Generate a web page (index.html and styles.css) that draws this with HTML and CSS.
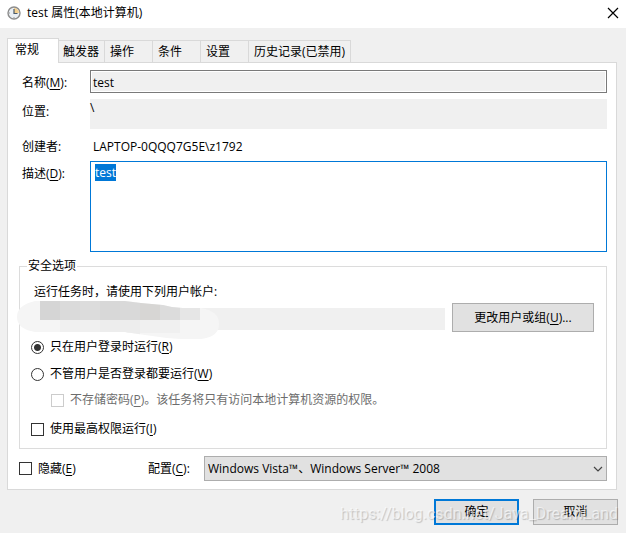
FILE: index.html
```html
<!DOCTYPE html>
<html lang="zh-CN">
<head>
    <meta charset="UTF-8">
    <meta name="viewport" content="width=device-width, initial-scale=1.0">
    <title>test 属性(本地计算机)</title>
    <link rel="stylesheet" href="styles.css">
</head>
<body>
    <header class="titlebar">
        <svg class="clock" width="14" height="14" viewBox="0 0 14 14">
            <circle cx="7" cy="7" r="6" fill="#e9eef3" stroke="#8c8c8c" stroke-width="1.4"/>
            <path d="M7 7V2a5 5 0 0 1 5 5z" fill="#f3cf8e"/>
            <path d="M7 3v4.500h3.500" fill="none" stroke="#4a5a6a" stroke-width="1.200"/>
            <path d="M7 11v1M2 7h1" stroke="#999"/>
        </svg>
        <h1 class="title">test 属性(本地计算机)</h1>
        <button class="close" type="button" aria-label="关闭">
            <svg width="12" height="12" viewBox="0 0 12 12">
                <path d="M1 1l10 10M11 1L1 11" fill="none" stroke="#000" stroke-width="1.200"/>
            </svg>
        </button>
    </header>

    <form class="dialog">
        <nav class="tabs">
            <button type="button" class="tab tab-active">常规</button>
            <button type="button" class="tab tab-wide">触发器</button>
            <button type="button" class="tab">操作</button>
            <button type="button" class="tab">条件</button>
            <button type="button" class="tab">设置</button>
            <button type="button" class="tab tab-last">历史记录(已禁用)</button>
        </nav>

        <main class="panel">
            <div class="fields">
                <label for="name">名称(<u>M</u>):</label>
                <input class="name" id="name" type="text" value="test" readonly>
                <label for="location">位置:</label>
                <output class="location" id="location">\</output>
                <label for="author">创建者:</label>
                <output class="author" id="author">LAPTOP-0QQQ7G5E\z1792</output>
                <label for="description">描述(<u>D</u>):</label>
                <textarea class="description" id="description" spellcheck="false">test</textarea>
            </div>

            <fieldset class="security">
                <legend>安全选项</legend>
                <label class="account-label" for="account">运行任务时，请使用下列用户帐户:</label>
                <div class="account-row">
                    <div class="account">
                        <output class="account-name" id="account"></output>
                        <svg class="smudge" width="202" height="39" viewBox="0 0 202 39">
                            <clipPath id="stroke">
                                <path d="M18 0H108Q116 1 124 2L146 4Q156 7 166 7H184Q202 10 202 23T184 38H164Q146 37 128 34L108 31H18Q0 28 0 16T18 0z"/>
                            </clipPath>
                            <g clip-path="url(#stroke)">
                                <path d="M0 0h202v39H0z" fill="#f5f5f5"/>
                                <path d="M43 19h120v13H43z" fill="#f0f0f0"/>
                                <path d="M83 19h40v20H83z" fill="#ededed"/>
                                <path d="M23 0h20v19H23z" fill="#d5d5d5"/>
                                <path d="M43 0h20v19H43z" fill="#dadada"/>
                                <path d="M63 0h20v19H63z" fill="#dcdcdc"/>
                                <path d="M83 0h20v19H83z" fill="#d8d8d8"/>
                                <path d="M103 0h20v19h-20z" fill="#d9d9d9"/>
                                <path d="M123 0h20v19h-20z" fill="#d7d6d4"/>
                                <path d="M143 0h20v19h-20z" fill="#dcdcdc"/>
                                <path d="M163 0h20v19h-20z" fill="#e6e6e6"/>
                            </g>
                        </svg>
                    </div>
                    <button type="button" class="btn btn-change">更改用户或组(<u>U</u>)...</button>
                </div>
                <label class="option"><input type="radio" name="logon" checked><span>只在用户登录时运行(<u>R</u>)</span></label>
                <label class="option"><input type="radio" name="logon"><span>不管用户是否登录都要运行(<u>W</u>)</span></label>
                <label class="option option-sub"><input type="checkbox" disabled><span>不存储密码(<u>P</u>)。该任务将只有访问本地计算机资源的权限。</span></label>
                <label class="option option-top"><input type="checkbox"><span>使用最高权限运行(<u>I</u>)</span></label>
            </fieldset>

            <div class="config">
                <label class="option hidden-task"><input type="checkbox"><span>隐藏(<u>E</u>)</span></label>
                <label class="config-label" for="config">配置(<u>C</u>):</label>
                <div class="select-box">
                    <select id="config">
                        <option>Windows Vista™、Windows Server™ 2008</option>
                    </select>
                    <svg class="chevron" width="10" height="6" viewBox="0 0 10 6">
                        <path d="M1 1l4 4 4-4" fill="none" stroke="#444" stroke-width="1.200"/>
                    </svg>
                </div>
            </div>
        </main>

        <footer class="actions">
            <button type="submit" class="btn btn-default">确定</button>
            <button type="button" class="btn">取消</button>
            <span class="watermark">https://blog.csdn.net/Java_DreamLand</span>
        </footer>
    </form>

    <script>
        const description = document.getElementById("description");
        description.focus();
        description.select();
    </script>
</body>
</html>
```
FILE: styles.css
```css
* {
    box-sizing: border-box;
}
body {
    margin: 0;
    min-height: 100vh;
    background: #f0f0f0;
    color: #000;
    font: 12px/16px "Open Sans", "Noto Sans CJK SC", sans-serif;
}
button, input, select, textarea {
    font: inherit;
    color: inherit;
    border-radius: 0;
}
u {
    text-underline-offset: 2px;
}

/* title bar */
.titlebar {
    display: flex;
    align-items: center;
    height: 28px;
    padding: 0 7px 2px 7px;
    background: #fff;
}
.title {
    flex: 1;
    margin: 0 0 0 6px;
    font-size: 12px;
    font-weight: normal;
}
.close {
    display: flex;
    padding: 0;
    border: 0;
    background: none;
}

/* tabs */
.dialog {
    padding: 10px 9px 8px 7px;
}
.tabs {
    display: flex;
    align-items: flex-end;
}
.tab {
    width: 48px;
    height: 22px;
    padding: 0 0 0 5px;
    border: 1px solid #d9d9d9;
    border-width: 1px 1px 0 0;
    background: #f0f0f0;
    text-align: left;
    white-space: nowrap;
}
.tab-wide {
    width: 46px;
    padding-left: 4px;
}
.tab-last {
    width: 102px;
}
.tab-active {
    width: 52px;
    height: 25px;
    margin-bottom: -1px;
    padding: 0 0 2px 7px;
    border-left-width: 1px;
    background: #fff;
    position: relative;
}
.panel {
    padding: 7px 9px 8px 11px;
    border: 1px solid #d9d9d9;
    background: #fff;
}

/* general fields */
.fields {
    display: grid;
    grid-template-columns: 68px 1fr;
    margin-left: 3px;
}
.fields label {
    padding-top: 5px;
}
.name {
    height: 23px;
    margin-bottom: 6px;
    padding: 1px 2px 0;
    border: 1px solid #7a7a7a;
    outline: 0;
    background: #f0f0f0;
    box-shadow: inset 0 0 0 1px #fff;
}
.location {
    height: 30px;
    padding-top: 1px;
    background: #f0f0f0;
}
.fields label[for="author"] {
    padding-top: 10px;
}
.author {
    height: 32px;
    padding: 10px 3px 0;
}
.description {
    height: 91px;
    padding: 3px 4px;
    border: 1px solid #0078d7;
    outline: 0;
    resize: none;
}
.description::selection {
    background: #0078d7;
    color: #fff;
}

/* security options */
.security {
    margin: 6px 0 7px;
    padding: 10px 12px 11px 11px;
    border: 1px solid #dcdcdc;
    min-width: 0;
}
.security legend {
    margin-left: -4px;
    padding: 0 1px;
}
.account-label {
    display: block;
    margin-left: 3px;
}
.account-row {
    display: flex;
    gap: 7px;
    margin: 3px 0 7px;
}
.account {
    flex: 1;
    padding-top: 5px;
    position: relative;
}
.account-name {
    display: block;
    height: 22px;
    background: #f0f0f0;
}
.smudge {
    position: absolute;
    left: -14px;
    top: -2px;
}
.option {
    display: flex;
    align-items: center;
    gap: 6px;
    height: 16px;
    margin-bottom: 11px;
}
.option input {
    appearance: none;
    flex: none;
    width: 13px;
    height: 13px;
    margin: 0;
    border: 1px solid #333;
    background: #fff;
}
.option input[type="radio"] {
    border-radius: 50%;
}
.option input[type="radio"]:checked {
    background: radial-gradient(circle, #333 3px, #fff 4px);
}
.option input:disabled {
    border-color: #ccc;
}
.option-sub {
    margin: -1px 0 13px 20px;
    color: #6d6d6d;
}
.option-top {
    margin: 0;
}

/* configuration */
.config {
    display: flex;
    align-items: center;
}
.hidden-task {
    width: 129px;
    margin: 0;
}
.config-label {
    width: 56px;
}
.select-box {
    flex: 1;
    position: relative;
}
.select-box select {
    display: block;
    appearance: none;
    width: 100%;
    height: 25px;
    padding: 0 20px 0 3px;
    border: 1px solid #adadad;
    background: #e1e1e1;
}
.chevron {
    position: absolute;
    right: 4px;
    top: 10px;
    pointer-events: none;
}

/* buttons */
.btn {
    width: 85px;
    height: 26px;
    padding: 0;
    border: 1px solid #adadad;
    background: #e1e1e1;
}
.btn-change {
    width: 142px;
    height: 29px;
}
.btn-default {
    border: 2px solid #0078d7;
}
.actions {
    display: flex;
    justify-content: flex-end;
    gap: 14px;
    margin: 9px -1px 0 0;
    position: relative;
}
.watermark {
    position: absolute;
    right: 0;
    top: 4px;
    color: rgba(255, 255, 255, 0.6);
    font: 16px/22px Roboto, sans-serif;
    text-shadow: 1px 1px 1px rgba(0, 0, 0, 0.2);
    pointer-events: none;
}
```
